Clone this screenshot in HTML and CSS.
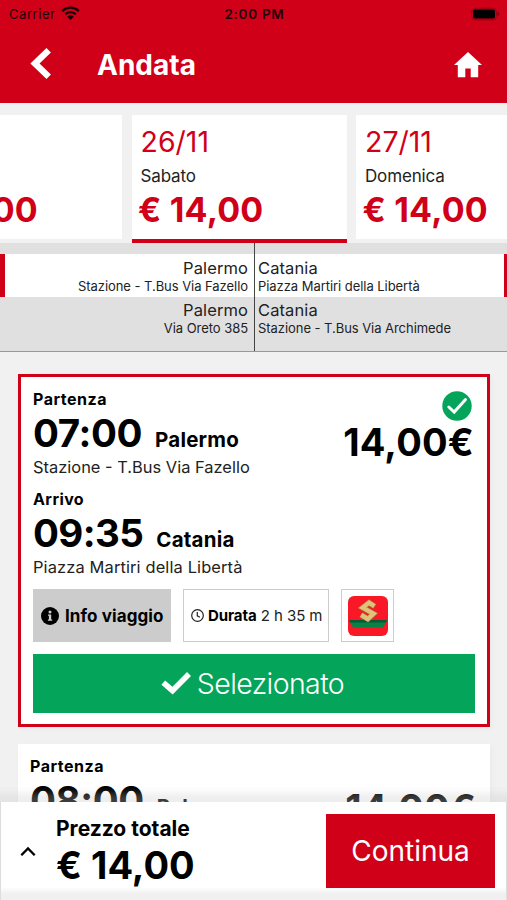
FILE: index.html
```html
<!DOCTYPE html>
<html lang="it">
<head>
<meta charset="utf-8">
<meta name="viewport" content="width=device-width, initial-scale=1">
<title>Andata</title>
<link rel="stylesheet" href="styles.css">
</head>
<body>
<div class="app">
  <header class="header">
    <div class="status">
      <div class="carrier"><span>Carrier</span>
        <svg class="wifi" width="19" height="15" viewBox="0 0 19 15"><g fill="none" stroke="#170003" stroke-width="2.3"><path d="M1.2 5.1a11.8 11.8 0 0 1 16.6 0"/><path d="M4.2 8.3a7.5 7.5 0 0 1 10.6 0"/></g><path d="M9.5 14 6.2 10.7a4.7 4.7 0 0 1 6.600 0Z" fill="#170003"/></svg>
      </div>
      <span class="clock">2:00 PM</span>
      <svg class="battery" width="30" height="14" viewBox="0 0 30 14"><rect x="1.7" y="1.2" width="24.6" height="11.6" rx="3.2" fill="none" stroke="#950011" stroke-width="1"/><rect x="3" y="2.5" width="22" height="9" rx="1.8" fill="#000"/><path d="M27.5 5c2.4.6 2.4 3.4 0 4Z" fill="#850010"/></svg>
    </div>
    <div class="nav">
      <svg class="back" width="22" height="34" viewBox="0 0 22 34"><path d="M18.7 3.3 5 16.5l13.700 13.200" fill="none" stroke="#fff" stroke-width="6.4"/></svg>
      <h1 class="title">Andata</h1>
      <svg class="home" width="30" height="28" viewBox="0 0 30 28"><path d="M15 1 29 14h-3.800v12.300h-7.500v-8.800h-5.400v8.800H4.800V14H1Z" fill="#fff"/></svg>
    </div>
  </header>

  <section class="days">
    <div class="day day-prev"><span class="day-price">€ 14,00</span></div>
    <div class="day day-active">
      <span class="day-date">26/11</span><span class="day-name">Sabato</span><span class="day-price">€ 14,00</span>
    </div>
    <div class="day">
      <span class="day-date">27/11</span><span class="day-name">Domenica</span><span class="day-price">€ 14,00</span>
    </div>
  </section>

  <section class="routes">
    <div class="route-gap"><i></i><i></i></div>
    <div class="route selected">
      <div class="stop from"><b>Palermo</b><small>Stazione - T.Bus Via Fazello</small></div>
      <div class="stop to"><b>Catania</b><small>Piazza Martiri della Libertà</small></div>
    </div>
    <div class="route last">
      <div class="stop from"><b>Palermo</b><small>Via Oreto 385</small></div>
      <div class="stop to"><b>Catania</b><small>Stazione - T.Bus Via Archimede</small></div>
    </div>
  </section>

  <main class="trips">
    <article class="trip chosen">
      <div class="trip-top">
        <div class="legs">
          <div class="label">Partenza</div>
          <div class="leg"><span class="time">07:00</span><span class="city">Palermo</span></div>
          <div class="place">Stazione - T.Bus Via Fazello</div>
          <div class="label arrive">Arrivo</div>
          <div class="leg"><span class="time arrival-time">09:35</span><span class="city">Catania</span></div>
          <div class="place arrival-place">Piazza Martiri della Libertà</div>
        </div>
        <div class="cost">
          <svg class="badge" width="30" height="30" viewBox="0 0 30 30"><circle cx="15" cy="15" r="14.700" fill="#04a55b"/><path d="m6.800 16 5.400 5 11.300-12.500" fill="none" stroke="#fff" stroke-width="3" stroke-linecap="round"/></svg>
          <span class="amount">14,00€</span>
        </div>
      </div>
      <div class="chips">
        <div class="chip info">
          <svg width="18" height="18" viewBox="0 0 18 18"><circle cx="9" cy="9" r="9" fill="#000"/><path d="M7 7.500h3.200v5h1v1.300H6.900v-1.300h1V8.800H7Z" fill="#ccc"/><circle cx="9" cy="5" r="1.500" fill="#ccc"/></svg>
          <span>Info viaggio</span>
        </div>
        <div class="chip duration">
          <svg width="13" height="13" viewBox="0 0 13 13"><g fill="none" stroke="#222" stroke-width="1.200"><circle cx="6.500" cy="6.500" r="5.800"/><path d="M6.300 3v3.800l2.600 1.500"/></g></svg>
          <span><strong>Durata</strong> 2 h 35 m</span>
        </div>
        <div class="chip brand">
          <svg width="40" height="40" viewBox="0 0 40 40"><rect width="40" height="40" rx="6" fill="#fb1826"/><path d="M1 24h38l-4 7.500H5Z" fill="#078346"/><path d="M1 24h38l-1 2.500H2Z" fill="#075b36"/><g fill="none"><path d="M26.800 10.500 21 6.600l-6.300 5 10.800 6.100-5.700 5.300-7-4.300" stroke="#a47b3b" stroke-width="5.600"/><path d="M26.400 10.200 21 6.600l-6.300 5 10.800 6.100-5.700 5.300-6.600-4" stroke="#e0c27a" stroke-width="4.400"/></g></svg>
        </div>
      </div>
      <div class="select">
        <svg width="30" height="24" viewBox="0 0 30 24"><path d="m2.300 11.700 9.200 8L28 3" fill="none" stroke="#fff" stroke-width="5.600"/></svg>
        <span>Selezionato</span>
      </div>
    </article>
    <article class="trip next">
      <div class="trip-top">
        <div class="legs">
          <div class="label">Partenza</div>
          <div class="leg"><span class="time">08:00</span><span class="city">Palermo</span></div>
        </div>
        <div class="cost"><span class="amount">14,00€</span></div>
      </div>
    </article>
  </main>

  <footer class="footer">
    <svg class="up" width="16" height="11" viewBox="0 0 16 11"><path d="m1.300 9.300 6.700-6.800 6.700 6.800" fill="none" stroke="#000" stroke-width="2.300"/></svg>
    <div class="total"><span class="total-label">Prezzo totale</span><span class="total-price">€ 14,00</span></div>
    <div class="continue"><span>Continua</span></div>
  </footer>
</div>
</body>
</html>
```

FILE: styles.css
```css
* { box-sizing: border-box; }
body { margin: 0; background: #f1f1f1; font-family: Inter, "Liberation Sans", sans-serif; color: #000; }
svg { display: block; flex: none; }
span, b, small { white-space: nowrap; }
.app { width: 507px; height: 900px; overflow: hidden; position: relative; display: flex; flex-direction: column; background: #f1f1f1; }

.header { height: 103px; flex: none; background: #d00018; }
.status { height: 27px; display: grid; grid-template-columns: 1fr auto 1fr; align-items: center; padding: 0 7px 0 9px; font-size: 13px; color: #24000a; }
.carrier { display: flex; align-items: center; gap: 6px; letter-spacing: .55px; }
.clock { font-size: 13.500px; font-weight: 600; letter-spacing: .7px; }
.battery { justify-self: end; }
.nav { height: 76px; display: flex; align-items: center; padding: 0 24px 0 30px; }
.back { margin-top: -3px; }
.title { margin: 0 auto 0 45px; font-size: 28px; font-weight: 700; line-height: 76px; color: #fff; }

.days { height: 140px; flex: none; display: grid; grid-template-columns: 122px 215px 216px; gap: 9.500px; padding-top: 12px; overflow: hidden; }
.day { height: 124px; background: #fff; padding: 12px 0 0 9px; display: flex; flex-direction: column; }
.day-active { height: 128px; border-bottom: 4px solid #d00018; }
.day-prev { padding: 71px 84px 0 0; align-items: flex-end; }
.day-date { font-size: 28.500px; line-height: 30px; color: #d00018; }
.day-name { font-size: 17px; line-height: 20px; margin-top: 9px; color: #222; letter-spacing: -.15px; }
.day-price { font-size: 34px; line-height: 34px; margin-top: 7px; font-weight: 700; color: #d00018; margin-left: -2.500px; letter-spacing: .2px; }

.routes { height: 109px; flex: none; background: #e0e0e0; border-bottom: 1px solid #999; }
.route-gap { height: 11px; display: grid; grid-template-columns: 255px 1fr; }
.route-gap i:first-child { border-right: 1px solid #444; }
.route { height: 43px; display: grid; grid-template-columns: 255px 1fr; color: #222; }
.route.last { height: 54px; }
.route.selected { background: #fff; border: solid #d00018; border-width: 0 3px 0 5px; grid-template-columns: 250px 1fr; }
.stop { display: flex; flex-direction: column; padding-top: 4px; }
.last .stop { padding-top: 3px; }
.stop b { font-weight: 400; font-size: 16.500px; line-height: 20px; letter-spacing: .1px; }
.stop small { font-size: 13px; line-height: 16px; letter-spacing: -.05px; }
.from { align-items: flex-end; padding-right: 6px; border-right: 1px solid #444; }
.to { padding-left: 3px; }

.trips { padding: 22px 17px 0 18px; }
.trip { background: #fff; box-shadow: 2px 2px 6px rgba(0,0,0,.03); }
.chosen { height: 353px; border: 3px solid #d00018; padding: 12px 12px 0; }
.next { height: 160px; margin-top: 17px; padding: 12px 13px 0 12px; }
.trip-top { display: flex; justify-content: space-between; }
.label { font-size: 16px; line-height: 20px; font-weight: 700; letter-spacing: .5px; }
.arrive { margin-top: 12px; letter-spacing: .4px; }
.leg { display: flex; align-items: baseline; gap: 13px; line-height: 48px; height: 48px; }
.time { font-size: 38.500px; font-weight: 700; letter-spacing: -.4px; }
.arrival-time { letter-spacing: -.6px; }
.city { font-size: 20.500px; font-weight: 700; line-height: 24px; letter-spacing: .2px; }
.place { font-size: 16.450px; line-height: 20px; color: #222; }
.arrival-place { letter-spacing: .12px; }
.cost { display: flex; flex-direction: column; align-items: flex-end; }
.badge { margin: 2px 3px 0 0; }
.amount { font-size: 38px; font-weight: 700; line-height: 40px; margin: 1px 1px 0 0; letter-spacing: .2px; }
.next .amount { margin-top: 32px; }
.chips { display: flex; gap: 12px; margin-top: 12px; }
.chip { height: 53px; border: 1px solid #ccc; display: flex; align-items: center; }
.info { width: 138px; background: #ccc; padding-left: 7px; gap: 6px; font-size: 17px; font-weight: 700; letter-spacing: .1px; }
.duration { width: 146px; padding-left: 7px; gap: 4px; font-size: 15px; color: #222; letter-spacing: -.07px; }
.duration strong { color: #000; }
.brand { width: 53px; justify-content: center; }
.select { height: 59px; margin-top: 12px; padding-right: 3px; background: #04a55b; color: #fff; display: flex; align-items: center; justify-content: center; gap: 6px; font-size: 28.500px; font-weight: 300; letter-spacing: -.6px; }
.select svg { margin-top: -1px; }

.footer { position: absolute; left: 0; right: 0; bottom: 0; height: 98px; background: linear-gradient(#fff 0 85px, #f0f0f0 92px); border-left: 1px solid #ddd; border-right: 1px solid #ddd; box-shadow: 0 -4px 7px 5px rgba(200,200,200,.3); display: flex; padding: 12px 11px 0 19px; }
.up { margin-top: 32px; }
.total { display: flex; flex-direction: column; margin-left: 20px; padding-top: 3px; font-weight: 700; }
.total-label { font-size: 21px; line-height: 24px; }
.total-price { font-size: 38px; line-height: 48px; }
.continue { width: 169px; height: 74px; margin-left: auto; background: #d00018; color: #fff; font-size: 28px; display: flex; align-items: center; justify-content: center; }
```
